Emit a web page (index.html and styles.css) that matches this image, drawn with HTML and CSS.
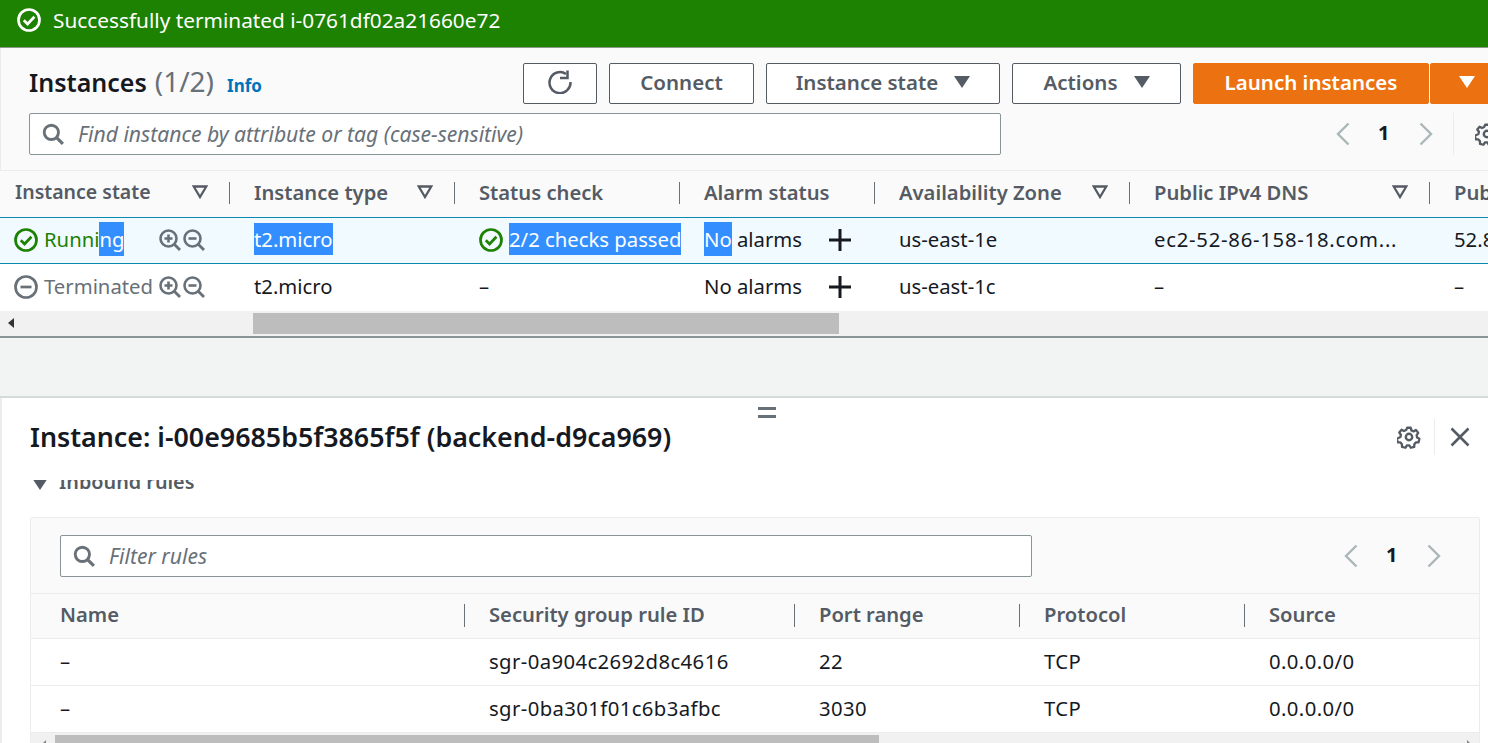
FILE: index.html
```html
<!DOCTYPE html>
<html lang="en">
<head>
<meta charset="UTF-8">
<meta name="viewport" content="width=device-width, initial-scale=1.0">
<title>Instances</title>
<link rel="stylesheet" href="styles.css">
</head>
<body>
<svg class="defs" width="0" height="0">
  <symbol id="i-search" viewBox="0 0 20 20"><circle cx="8.5" cy="8.5" r="6.5" fill="none" stroke="currentColor" stroke-width="2.6"/><path d="M13 13l6 6" fill="none" stroke="currentColor" stroke-width="2.8"/></symbol>
  <symbol id="i-ok" viewBox="0 0 24 24"><circle cx="12" cy="12" r="10.5" fill="none" stroke="currentColor" stroke-width="2.7"/><path d="M6.800 12.200l3.800 3.800L17.400 8.800" fill="none" stroke="currentColor" stroke-width="2.700"/></symbol>
  <symbol id="i-stop" viewBox="0 0 24 24"><circle cx="12" cy="12" r="10.5" fill="none" stroke="currentColor" stroke-width="2.7"/><path d="M6.500 12h11" fill="none" stroke="currentColor" stroke-width="2.700"/></symbol>
  <symbol id="i-zoomin" viewBox="0 0 22 22"><circle cx="9.5" cy="9.5" r="8" fill="none" stroke="currentColor" stroke-width="2.6"/><path d="M15 15l6 6" fill="none" stroke="currentColor" stroke-width="2.800"/><path d="M5.500 9.500h8M9.500 5.500v8" fill="none" stroke="currentColor" stroke-width="2.600"/></symbol>
  <symbol id="i-zoomout" viewBox="0 0 22 22"><circle cx="9.5" cy="9.5" r="8" fill="none" stroke="currentColor" stroke-width="2.6"/><path d="M15 15l6 6" fill="none" stroke="currentColor" stroke-width="2.800"/><path d="M5.500 9.500h8" fill="none" stroke="currentColor" stroke-width="2.600"/></symbol>
  <symbol id="i-sort" viewBox="0 0 14 12"><path d="M1.500 1.200h11L7 10.400z" fill="none" stroke="currentColor" stroke-width="2"/></symbol>
  <symbol id="i-caret" viewBox="0 0 16 12"><path d="M0 0h16L8 12z" fill="currentColor"/></symbol>
  <symbol id="i-plus" viewBox="0 0 22 22"><path d="M11 0v22M0 11h22" fill="none" stroke="currentColor" stroke-width="3"/></symbol>
  <symbol id="i-prev" viewBox="0 0 14 24"><path d="M12.500 1.500L2 12l10.500 10.500" fill="none" stroke="currentColor" stroke-width="2.400"/></symbol>
  <symbol id="i-next" viewBox="0 0 14 24"><path d="M1.500 1.500L12 12 1.500 22.500" fill="none" stroke="currentColor" stroke-width="2.400"/></symbol>
  <symbol id="i-gear" viewBox="0 0 24 24"><circle cx="12" cy="12" r="3.2" fill="none" stroke="currentColor" stroke-width="2.4"/><path d="M10 1.600h4l.7 3 2.400 1.100 2.700-1.500 2.600 3.200-1.800 2.500.5 2.600 2.600 1.500-.9 3.900-3.100.2-1.700 2-.1 3-3.900 1-1.600-2.600h-2.700l-1.600 2.600-3.900-1-.1-3-1.700-2-3.100-.2-.9-3.900L2.400 12.100l.5-2.600L1.100 7l2.600-3.200 2.700 1.500L8.800 4.200z" transform="translate(1.300 1.300) scale(.89)" fill="none" stroke="currentColor" stroke-width="2.600" stroke-linejoin="round"/></symbol>
  <symbol id="i-close" viewBox="0 0 20 20"><path d="M1.500 1.500l17 17M18.500 1.500l-17 17" fill="none" stroke="currentColor" stroke-width="2.600"/></symbol>
  <symbol id="i-refresh" viewBox="0 0 24 24"><path d="M18 4A10.500 10.500 0 1 0 22.500 12" fill="none" stroke="currentColor" stroke-width="2.500"/><path d="M19.500 .5v7.500H12" fill="none" stroke="currentColor" stroke-width="2.500"/></symbol>
</svg>

<div class="flash">
  <svg class="flash-icon"><use href="#i-ok"/></svg>
  <span>Successfully terminated i-0761df02a21660e72</span>
</div>

<section class="instances">
  <div class="toolbar">
    <h1 class="page-title">Instances <span class="count">(1/2)</span><a class="info" href="#">Info</a></h1>
    <button class="btn btn-refresh"><svg class="icon-refresh"><use href="#i-refresh"/></svg></button>
    <button class="btn btn-connect">Connect</button>
    <button class="btn btn-state">Instance state<svg class="caret"><use href="#i-caret"/></svg></button>
    <button class="btn btn-actions">Actions<svg class="caret"><use href="#i-caret"/></svg></button>
    <button class="btn btn-primary btn-launch">Launch instances</button>
    <button class="btn btn-primary btn-more"><svg class="caret"><use href="#i-caret"/></svg></button>
  </div>
  <div class="filter-row">
    <div class="search search-main"><svg class="search-icon"><use href="#i-search"/></svg><span>Find instance by attribute or tag (case-sensitive)</span></div>
    <div class="pager pager-main">
      <svg class="chev"><use href="#i-prev"/></svg><b>1</b><svg class="chev"><use href="#i-next"/></svg>
      <span class="pager-sep"></span><svg class="pager-gear"><use href="#i-gear"/></svg>
    </div>
  </div>
</section>

<div class="grid grid-head inst-cols">
  <div class="th">Instance state<svg class="sort"><use href="#i-sort"/></svg></div>
  <div class="th">Instance type<svg class="sort"><use href="#i-sort"/></svg></div>
  <div class="th">Status check</div>
  <div class="th">Alarm status</div>
  <div class="th">Availability Zone<svg class="sort"><use href="#i-sort"/></svg></div>
  <div class="th">Public IPv4 DNS<svg class="sort"><use href="#i-sort"/></svg></div>
  <div class="th">Public IPv4 address</div>
</div>
<div class="grid row row-selected inst-cols">
  <div class="td state"><svg class="status-icon ok"><use href="#i-ok"/></svg><span class="ok state-name">Runni<mark>ng</mark></span>
    <svg class="zoom"><use href="#i-zoomin"/></svg><svg class="zoom"><use href="#i-zoomout"/></svg></div>
  <div class="td"><mark>t2.micro</mark></div>
  <div class="td"><svg class="status-icon ok"><use href="#i-ok"/></svg><mark class="checks">2/2 checks passed</mark></div>
  <div class="td alarm"><span><mark>No</mark> alarms</span><svg class="plus"><use href="#i-plus"/></svg></div>
  <div class="td">us-east-1e</div>
  <div class="td dns">ec2-52-86-158-18.com...</div>
  <div class="td">52.86.158.18</div>
</div>
<div class="grid row inst-cols">
  <div class="td state"><svg class="status-icon off"><use href="#i-stop"/></svg><span class="off state-name">Terminated</span>
    <svg class="zoom"><use href="#i-zoomin"/></svg><svg class="zoom"><use href="#i-zoomout"/></svg></div>
  <div class="td">t2.micro</div>
  <div class="td">–</div>
  <div class="td alarm"><span>No alarms</span><svg class="plus"><use href="#i-plus"/></svg></div>
  <div class="td">us-east-1c</div>
  <div class="td">–</div>
  <div class="td">–</div>
</div>
<div class="hscroll hscroll-main">
  <span class="arrow-left"></span>
  <div class="thumb"></div>
</div>
<div class="gutter"></div>

<section class="split">
  <div class="handle"></div>
  <div class="split-head">
    <h2 class="split-title">Instance: i-00e9685b5f3865f5f (backend-d9ca969)</h2>
    <svg class="split-gear"><use href="#i-gear"/></svg>
    <span class="split-sep"></span>
    <svg class="split-close"><use href="#i-close"/></svg>
  </div>
  <div class="split-body">
    <div class="rules-title"><svg class="rules-caret"><use href="#i-caret"/></svg>Inbound rules</div>
    <div class="rules-card">
      <div class="rules-filter">
        <div class="search search-rules"><svg class="search-icon"><use href="#i-search"/></svg><span>Filter rules</span></div>
        <div class="pager pager-rules"><svg class="chev"><use href="#i-prev"/></svg><b>1</b><svg class="chev"><use href="#i-next"/></svg></div>
      </div>
      <div class="grid rules-head rule-cols">
        <div class="rh">Name</div>
        <div class="rh">Security group rule ID</div>
        <div class="rh">Port range</div>
        <div class="rh">Protocol</div>
        <div class="rh">Source</div>
      </div>
      <div class="grid rule-row rule-cols">
        <div class="rd">–</div><div class="rd">sgr-0a904c2692d8c4616</div><div class="rd">22</div><div class="rd">TCP</div><div class="rd">0.0.0.0/0</div>
      </div>
      <div class="grid rule-row rule-cols">
        <div class="rd">–</div><div class="rd">sgr-0ba301f01c6b3afbc</div><div class="rd">3030</div><div class="rd">TCP</div><div class="rd">0.0.0.0/0</div>
      </div>
      <div class="hscroll hscroll-rules"><span class="tiny-left"></span><div class="thumb"></div><span class="tiny-right"></span></div>
    </div>
  </div>
</section>
</body>
</html>
```

FILE: styles.css
```css
*{margin:0;padding:0;box-sizing:border-box;}
:root{
  --ink:#16191f;
  --grey:#545b64;
  --muted:#687078;
  --line:#eaeded;
  --field:#879596;
  --green:#1d8102;
  --orange:#ec7211;
  --pick:#338fff;
}
html,body{height:743px;overflow:hidden;}
body{width:1488px;font-family:"Noto Sans",sans-serif;font-size:20.3px;line-height:26px;color:var(--ink);background:#fff;}
svg{display:block;flex:none;}
.defs{position:absolute;}
mark{background:var(--pick);color:#fff;padding:3px 0;}

.flash{height:48px;background:var(--green);border-bottom:1px solid #8a9a86;color:#fff;font-size:20.8px;display:flex;align-items:center;gap:12px;padding:0 0 8px 17px;}
.flash-icon{width:24px;height:24px;}

.instances{height:122px;background:#fafafa;border-left:1px solid #eaeded;}
.toolbar{display:flex;align-items:center;height:41px;padding:15px 0 0 28px;box-sizing:content-box;}
.page-title{font-size:25px;font-weight:600;flex:1;display:flex;align-items:baseline;gap:8px;}
.count{font-size:28px;font-weight:400;color:var(--muted);}
.info{font-size:17px;font-weight:700;color:#0073bb;text-decoration:none;margin-left:5px;}
.btn{height:41px;background:#fff;border:1px solid var(--grey);border-radius:2px;color:var(--grey);font:600 20.5px "Noto Sans",sans-serif;display:flex;align-items:center;justify-content:center;gap:16px;flex:none;padding-bottom:3px;}
.btn-refresh{width:74px;}
.btn-connect{width:145px;margin-left:12px;}
.btn-state{width:234px;margin-left:12px;}
.btn-actions{width:169px;margin-left:12px;}
.btn-primary{background:var(--orange);border-color:var(--orange);color:#fff;}
.btn-launch{width:236px;margin-left:12px;}
.btn-more{width:74px;margin:0 -16px 0 1px;}
.icon-refresh{width:24px;height:24px;}
.caret{width:16px;height:12px;}

.filter-row{display:flex;align-items:center;margin-top:9px;padding-left:28px;}
.search{background:#fff;border:1px solid var(--field);border-radius:2px;height:42px;flex:none;display:flex;align-items:center;gap:14px;padding-left:12px;color:var(--muted);font-style:italic;font-size:21.1px;}
.search-icon{width:22px;height:22px;color:var(--muted);}
.search-main{width:972px;}
.pager{display:flex;align-items:center;font-size:20px;flex:none;}
.pager b{font-weight:700;color:var(--ink);padding-bottom:2px;margin-right:2px;}
.chev{width:14px;height:24px;color:#aab7b8;}
.pager-main{margin-left:335px;gap:28px;}
.pager-sep{width:1px;height:42px;background:#eaeded;margin-left:-8px;}
.pager-gear{width:24px;height:24px;color:var(--grey);margin-left:-7px;}

.grid{display:grid;}
.inst-cols{grid-template-columns:230px 225px 225px 195px 255px 300px 200px;}
.grid-head{height:47px;background:#fafafa;border-top:1px solid #eaeded;align-items:center;padding-bottom:2px;}
.th{font-weight:600;font-size:20.2px;color:var(--grey);height:22px;line-height:22px;display:flex;justify-content:space-between;align-items:center;padding:0 21px 2px 24px;border-right:1px solid var(--muted);white-space:nowrap;}
.th:first-child{padding-left:15px;font-size:19.5px;}
.th:last-child{border-right:0;}
.sort{width:16px;height:14px;color:var(--grey);}
.row{height:47px;align-items:center;background:#fff;padding-bottom:4px;}
.row-selected{background:#f1faff;border-top:1px solid #0a8ab0;border-bottom:1px solid #0a8ab0;padding-bottom:3px;}
.td{display:flex;align-items:center;padding-left:24px;white-space:nowrap;}
.td:first-child{padding-left:14px;}
.dns{letter-spacing:.75px;}
.status-icon{width:24px;height:24px;margin:2px 6px 0 0;}
.ok{color:var(--green);}
.off{color:var(--muted);}
.state-name{width:115px;}
.state-name mark{color:#fff;}
.zoom{width:22px;height:22px;color:var(--muted);margin:2px 2px 0 0;}
.alarm{justify-content:space-between;padding-right:24px;}
.plus{width:22px;height:22px;color:var(--ink);margin-top:2px;}

.hscroll{background:#f1f1f1;position:relative;}
.thumb{background:#bdbdbd;}
.hscroll-main{height:27px;border-bottom:2px solid #879596;padding:2px 0 0 253px;}
.hscroll-main .thumb{width:586px;height:21px;}
.arrow-left{position:absolute;left:8px;top:7px;border:5px solid transparent;border-left:0;border-right:6px solid #333;}
.gutter{height:60px;background:#f2f3f3;border-bottom:2px solid #d5dbdb;}

.split{height:345px;position:relative;border-left:2px solid #eaeded;}
.handle{position:absolute;left:756px;top:9px;width:18px;height:11px;border-top:3px solid var(--muted);border-bottom:3px solid var(--muted);}
.split-head{display:flex;align-items:center;height:82px;padding:0 18px 5px 28px;}
.split-title{font-size:26.8px;font-weight:600;flex:1;white-space:nowrap;}
.split-gear{width:24px;height:24px;color:var(--grey);}
.split-sep{width:1px;height:36px;background:#eaeded;margin:0 15px 0 13px;}
.split-close{width:20px;height:20px;color:var(--grey);}

.split-body{height:263px;overflow:hidden;padding:0 8px 0 28px;}
.rules-title{display:flex;align-items:center;gap:12px;height:26px;margin-top:-11px;font-weight:600;font-size:19.8px;color:var(--grey);padding-left:3px;}
.rules-caret{width:14px;height:10px;margin-top:6px;}
.rules-card{margin-top:22px;border:1px solid #eaeded;border-radius:2px;}
.rules-filter{height:75px;background:#fafafa;display:flex;align-items:center;padding:1px 0 0 29px;}
.search-rules{width:972px;}
.pager-rules{margin-left:312px;gap:28px;}
.rule-cols{grid-template-columns:434px 330px 225px 225px 235px;}
.rules-head{height:46px;background:#fafafa;align-items:center;border-top:1px solid #eaeded;border-bottom:1px solid #eaeded;padding-bottom:1px;}
.rh{font-weight:600;font-size:20.2px;color:var(--grey);height:23px;line-height:21px;padding-left:24px;border-right:1px solid var(--muted);white-space:nowrap;}
.rh:first-child{padding-left:29px;}
.rh:last-child{border-right:0;}
.rule-row{height:47px;align-items:center;border-bottom:1px solid #eaeded;padding-bottom:3px;}
.rd{padding-left:24px;white-space:nowrap;letter-spacing:.4px;}
.rd:first-child{padding-left:29px;}
.hscroll-rules{height:11px;padding:2px 0 0 24px;}
.hscroll-rules .thumb{width:824px;height:9px;}
.tiny-left{position:absolute;left:11px;top:7px;border:4px solid transparent;border-left:0;border-right:4px solid #888;}
.tiny-right{position:absolute;right:8px;top:7px;border:4px solid transparent;border-right:0;border-left:4px solid #888;}
```
